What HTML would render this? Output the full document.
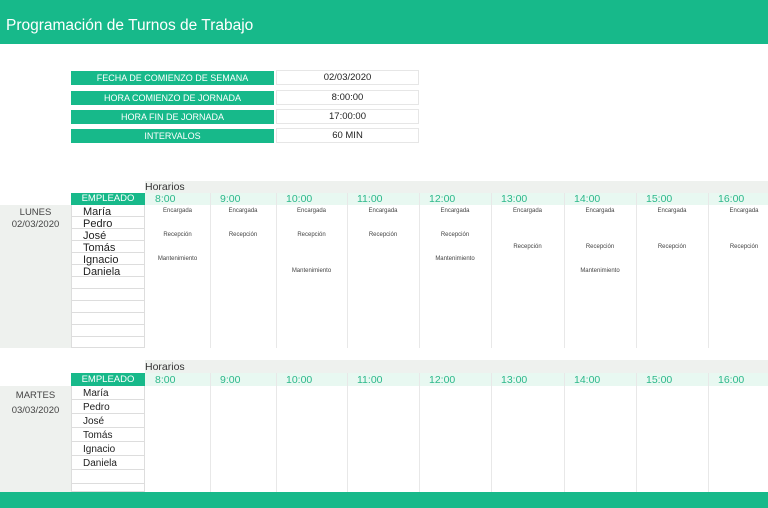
<!DOCTYPE html>
<html><head><meta charset="utf-8"><style>
*{margin:0;padding:0;box-sizing:border-box}
body{width:768px;height:508px;position:relative;background:#fff;font-family:"Liberation Sans",sans-serif;overflow:hidden;color:#333}
.a{position:absolute}
.g{background:#17b98a;color:#fff}
.lbl{left:71px;width:203px;height:14px;font-size:9px;text-align:center;line-height:14px}
.val{left:276px;width:143px;height:15px;border:1px solid #e6e6e6;font-size:9.5px;text-align:center;line-height:14px;color:#222}
.hr{font-size:10.5px;color:#2bb88a;line-height:12px;padding-left:10px}
.t{font-size:6px;color:#444;text-align:center}
.nm{font-size:10px;color:#222;padding-left:11px;border-bottom:1px solid #ddd;width:74px;left:71px;border-left:1px solid #ddd;border-right:1px solid #ddd}
.n1{font-size:11px}
.vl{width:1px;background:#e8e8e8}
</style></head><body>
<div class="a g" style="left:0;top:0;width:768px;height:44px"></div>
<div class="a" style="left:6px;top:17px;font-size:15.5px;color:#fff">Programación de Turnos de Trabajo</div>

<div class="a g lbl" style="top:71px">FECHA DE COMIENZO DE SEMANA</div>
<div class="a g lbl" style="top:91px">HORA COMIENZO DE JORNADA</div>
<div class="a g lbl" style="top:110px">HORA FIN DE JORNADA</div>
<div class="a g lbl" style="top:129px">INTERVALOS</div>
<div class="a val" style="top:70px">02/03/2020</div>
<div class="a val" style="top:90px">8:00:00</div>
<div class="a val" style="top:109px">17:00:00</div>
<div class="a val" style="top:128px">60 MIN</div>

<!-- section 1 -->
<div class="a" style="left:145px;top:181px;width:623px;height:12px;background:#eef1ee;font-size:10.5px;line-height:13px;color:#333">Horarios</div>
<div class="a" style="left:0;top:205px;width:71px;height:143px;background:#eef1ee;font-size:9.5px;text-align:center;padding-top:2px;line-height:12px;color:#444">LUNES<br>02/03/2020</div>
<div class="a g" style="left:71px;top:193px;width:74px;height:12px;font-size:9.5px;text-align:center;line-height:12px">EMPLEADO</div>
<div class="a" style="left:145px;top:193px;width:623px;height:12px;background:#e8f8f1"></div>
<div class="a hr" style="left:145px;top:193px">8:00</div>
<div class="a hr" style="left:210px;top:193px">9:00</div>
<div class="a hr" style="left:276px;top:193px">10:00</div>
<div class="a hr" style="left:347px;top:193px">11:00</div>
<div class="a hr" style="left:419px;top:193px">12:00</div>
<div class="a hr" style="left:491px;top:193px">13:00</div>
<div class="a hr" style="left:564px;top:193px">14:00</div>
<div class="a hr" style="left:636px;top:193px">15:00</div>
<div class="a hr" style="left:708px;top:193px">16:00</div>
<div class="a vl" style="left:210px;top:193px;height:155px"></div>
<div class="a vl" style="left:276px;top:193px;height:155px"></div>
<div class="a vl" style="left:347px;top:193px;height:155px"></div>
<div class="a vl" style="left:419px;top:193px;height:155px"></div>
<div class="a vl" style="left:491px;top:193px;height:155px"></div>
<div class="a vl" style="left:564px;top:193px;height:155px"></div>
<div class="a vl" style="left:636px;top:193px;height:155px"></div>
<div class="a vl" style="left:708px;top:193px;height:155px"></div>
<div class="a nm n1" style="top:205px;height:12px;line-height:14px">María</div>
<div class="a nm n1" style="top:217px;height:12px;line-height:14px">Pedro</div>
<div class="a nm n1" style="top:229px;height:12px;line-height:14px">José</div>
<div class="a nm n1" style="top:241px;height:12px;line-height:14px">Tomás</div>
<div class="a nm n1" style="top:253px;height:12px;line-height:14px">Ignacio</div>
<div class="a nm n1" style="top:265px;height:12px;line-height:14px">Daniela</div>
<div class="a nm" style="top:277px;height:12px"></div>
<div class="a nm" style="top:289px;height:12px"></div>
<div class="a nm" style="top:301px;height:12px"></div>
<div class="a nm" style="top:313px;height:12px"></div>
<div class="a nm" style="top:325px;height:12px"></div>
<div class="a nm" style="top:337px;height:11px"></div>

<div class="a t" style="left:145px;width:65px;top:208px">Encargada</div>
<div class="a t" style="left:145px;width:65px;top:232px">Recepción</div>
<div class="a t" style="left:145px;width:65px;top:256px">Mantenimiento</div>
<div class="a t" style="left:210px;width:66px;top:208px">Encargada</div>
<div class="a t" style="left:210px;width:66px;top:232px">Recepción</div>
<div class="a t" style="left:276px;width:71px;top:208px">Encargada</div>
<div class="a t" style="left:276px;width:71px;top:232px">Recepción</div>
<div class="a t" style="left:276px;width:71px;top:268px">Mantenimiento</div>
<div class="a t" style="left:347px;width:72px;top:208px">Encargada</div>
<div class="a t" style="left:347px;width:72px;top:232px">Recepción</div>
<div class="a t" style="left:419px;width:72px;top:208px">Encargada</div>
<div class="a t" style="left:419px;width:72px;top:232px">Recepción</div>
<div class="a t" style="left:419px;width:72px;top:256px">Mantenimiento</div>
<div class="a t" style="left:491px;width:73px;top:208px">Encargada</div>
<div class="a t" style="left:491px;width:73px;top:244px">Recepción</div>
<div class="a t" style="left:564px;width:72px;top:208px">Encargada</div>
<div class="a t" style="left:564px;width:72px;top:244px">Recepción</div>
<div class="a t" style="left:564px;width:72px;top:268px">Mantenimiento</div>
<div class="a t" style="left:636px;width:72px;top:208px">Encargada</div>
<div class="a t" style="left:636px;width:72px;top:244px">Recepción</div>
<div class="a t" style="left:708px;width:72px;top:208px">Encargada</div>
<div class="a t" style="left:708px;width:72px;top:244px">Recepción</div>

<!-- section 2 -->
<div class="a" style="left:145px;top:360px;width:623px;height:13px;background:#eef1ee;font-size:10.5px;line-height:14px;color:#333">Horarios</div>
<div class="a" style="left:0;top:386px;width:71px;height:106px;background:#eef1ee;font-size:9.5px;text-align:center;padding-top:2px;line-height:15px;color:#444">MARTES<br>03/03/2020</div>
<div class="a g" style="left:71px;top:373px;width:74px;height:13px;font-size:9.5px;text-align:center;line-height:13px">EMPLEADO</div>
<div class="a" style="left:145px;top:373px;width:623px;height:13px;background:#e8f8f1"></div>
<div class="a hr" style="left:145px;top:374px">8:00</div>
<div class="a hr" style="left:210px;top:374px">9:00</div>
<div class="a hr" style="left:276px;top:374px">10:00</div>
<div class="a hr" style="left:347px;top:374px">11:00</div>
<div class="a hr" style="left:419px;top:374px">12:00</div>
<div class="a hr" style="left:491px;top:374px">13:00</div>
<div class="a hr" style="left:564px;top:374px">14:00</div>
<div class="a hr" style="left:636px;top:374px">15:00</div>
<div class="a hr" style="left:708px;top:374px">16:00</div>
<div class="a vl" style="left:210px;top:373px;height:119px"></div>
<div class="a vl" style="left:276px;top:373px;height:119px"></div>
<div class="a vl" style="left:347px;top:373px;height:119px"></div>
<div class="a vl" style="left:419px;top:373px;height:119px"></div>
<div class="a vl" style="left:491px;top:373px;height:119px"></div>
<div class="a vl" style="left:564px;top:373px;height:119px"></div>
<div class="a vl" style="left:636px;top:373px;height:119px"></div>
<div class="a vl" style="left:708px;top:373px;height:119px"></div>
<div class="a nm" style="top:386px;height:14px;line-height:15px">María</div>
<div class="a nm" style="top:400px;height:14px;line-height:15px">Pedro</div>
<div class="a nm" style="top:414px;height:14px;line-height:15px">José</div>
<div class="a nm" style="top:428px;height:14px;line-height:15px">Tomás</div>
<div class="a nm" style="top:442px;height:14px;line-height:15px">Ignacio</div>
<div class="a nm" style="top:456px;height:14px;line-height:15px">Daniela</div>
<div class="a nm" style="top:470px;height:14px"></div>
<div class="a nm" style="top:484px;height:8px"></div>

<div class="a g" style="left:0;top:492px;width:768px;height:16px"></div>
</body></html>
